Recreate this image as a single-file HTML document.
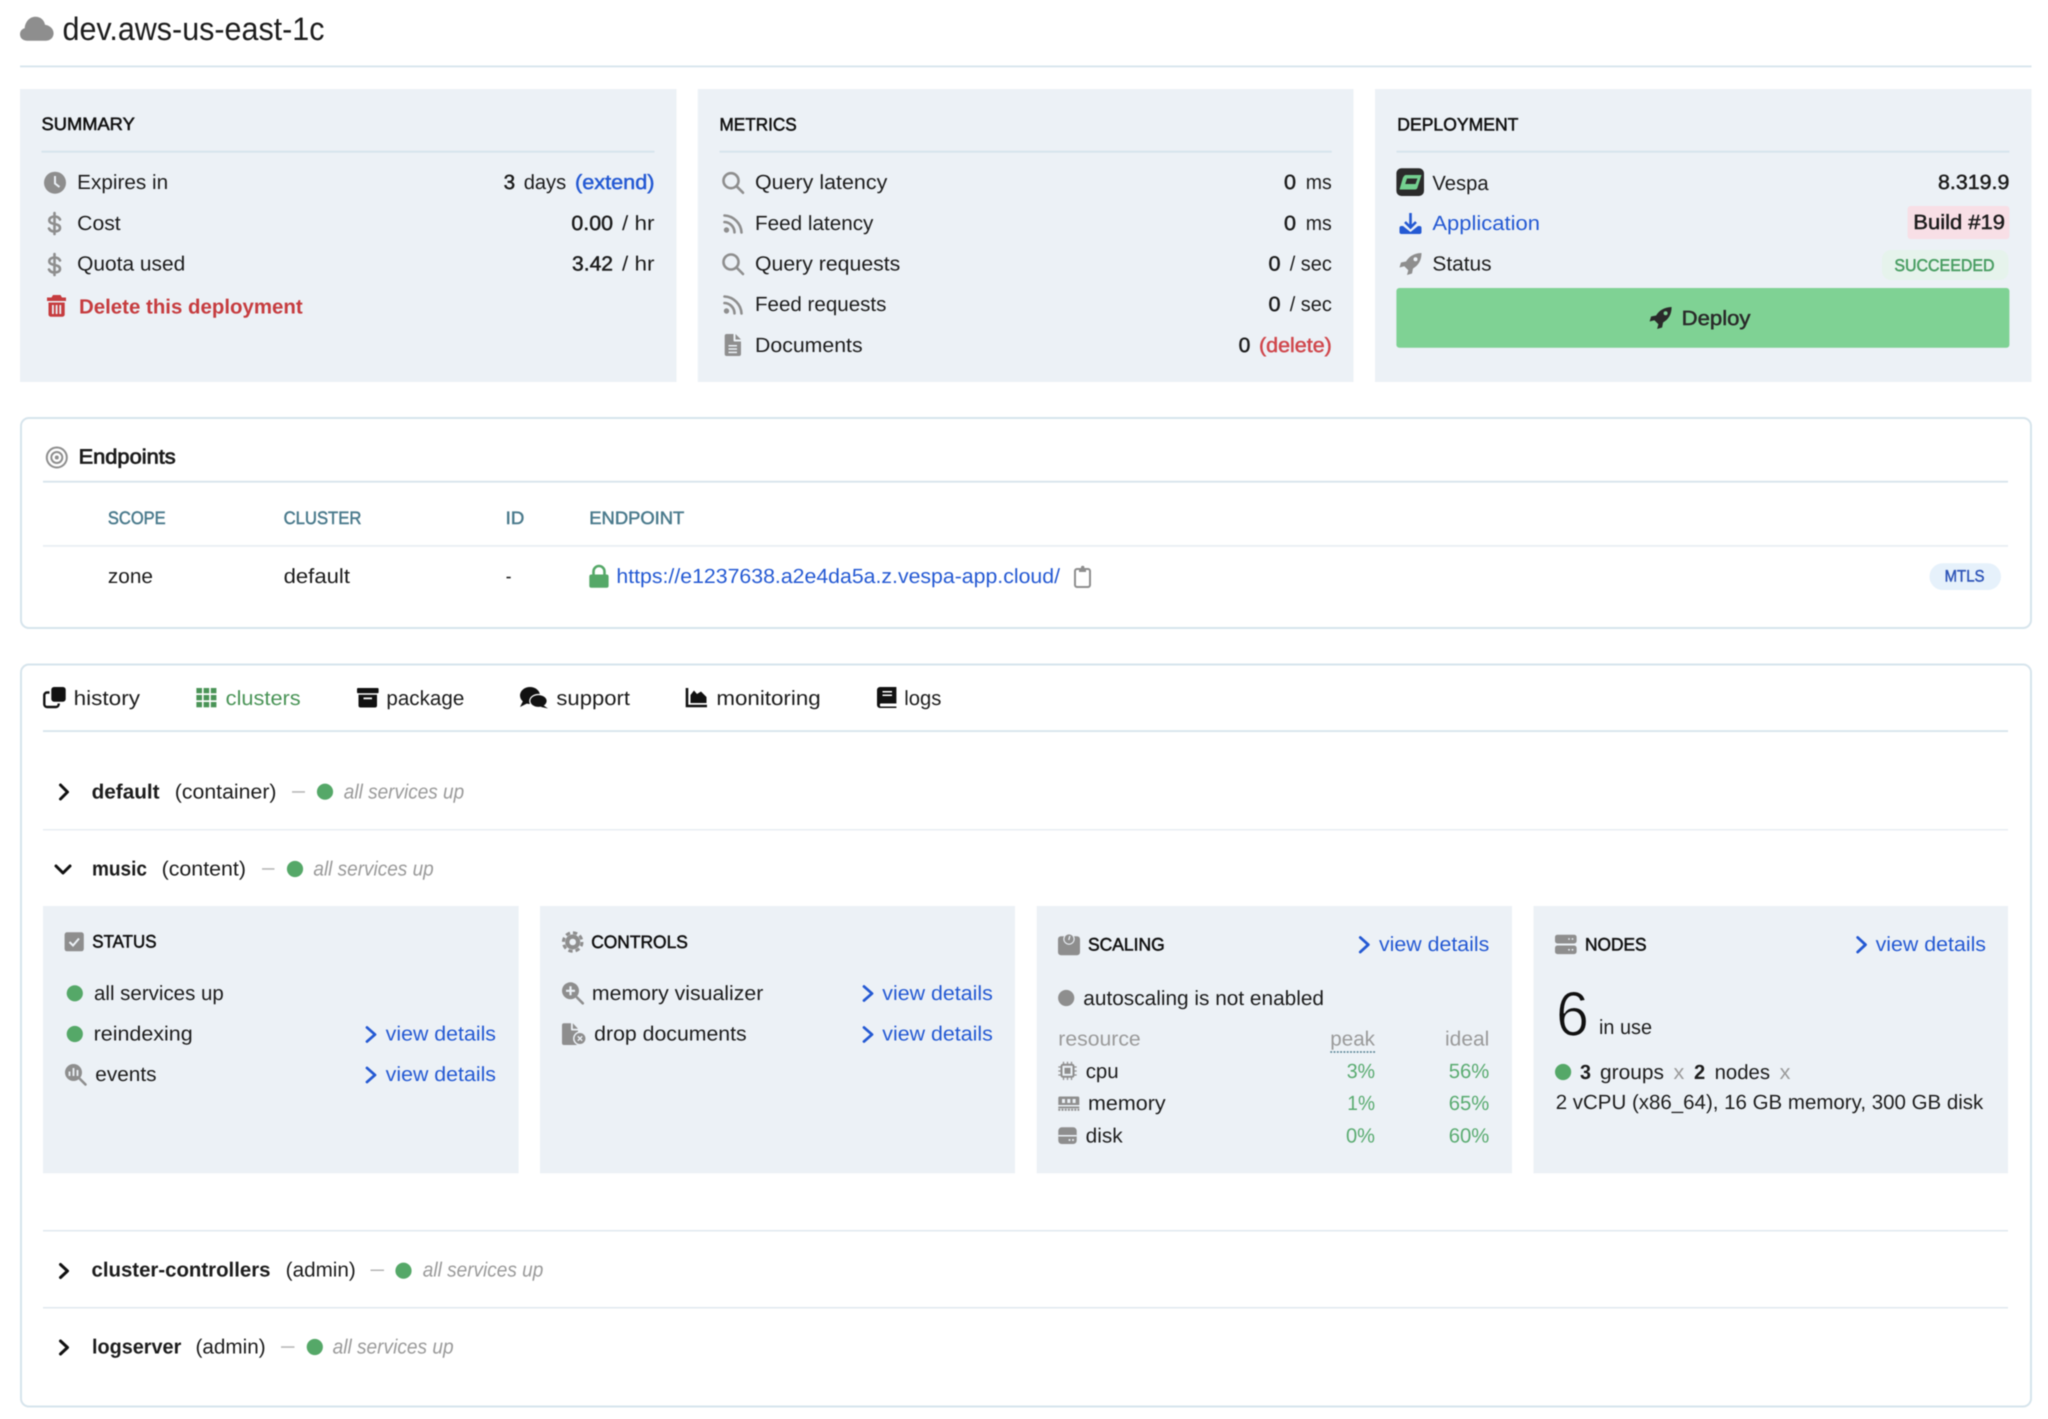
<!DOCTYPE html>
<html lang="en"><head><meta charset="utf-8"><title>dev.aws-us-east-1c</title>
<style>
html,body{margin:0;padding:0;background:#fff;width:2048px;height:1419px;overflow:hidden}
svg{display:block;filter:blur(.45px)}
text{font-family:"Liberation Sans",Arial,sans-serif;font-size:20.5px;fill:#1c1c1c;text-rendering:geometricPrecision;transform:translateY(-.9px)}
.m{stroke:#1c1c1c;stroke-width:.5px}
.b{font-weight:700}
.h{font-size:18px;stroke:#111;stroke-width:.55px;fill:#111}
.g{fill:#9a9a9a}
.i{font-style:italic;fill:#9a9a9a}
.l{fill:#2459d3}
.r{fill:#d0474c}
.th{font-size:18px;fill:#4a7a8c;stroke:#4a7a8c;stroke-width:.5px}
.p{fill:#59ab70}
.ic{fill:#8e8e8e}
.st{fill:none;stroke:#8e8e8e;stroke-width:2.6;stroke-linecap:round;stroke-linejoin:round}
.ch{fill:none;stroke:#111;stroke-width:3;stroke-linecap:round;stroke-linejoin:round}
.cb{fill:none;stroke:#2459d3;stroke-width:2.8;stroke-linecap:round;stroke-linejoin:round}
</style></head><body>
<svg xmlns="http://www.w3.org/2000/svg" width="2048" height="1419" viewBox="0 0 2048 1419">
<defs>
<path id="rocket" d="M22 0C14.500 .2 9.500 3.500 6.500 8.500L1.500 9.500L0 14.500L4.800 13.200L8.800 17.200L7.500 22L12.500 20.500L13.500 15.500C18.500 12.500 22 8 22 0ZM16 4.200a2 2 0 1 1 0 4a2 2 0 1 1 0-4Z" fill-rule="evenodd"/>
<path id="dollar" class="st" d="M12 6.500C11 4.500 9 3.500 6.500 3.500C3.500 3.500 1.300 5 1.300 7.300C1.300 12.500 12 9.500 12 15C12 17.300 9.800 18.500 6.500 18.500C4 18.500 2 17.500 1 15.500M6.500 0V21"/>
<g id="search" class="st"><circle cx="9" cy="9" r="7.500"/><path d="M14.500 14.500L21 21"/></g>
<g id="rss"><circle cx="3.500" cy="16" r="2.700" class="ic"/><path class="st" d="M1.500 8A10.500 10.500 0 0 1 11.500 18.300M1.500 1.500A18 18 0 0 1 18.500 18.500"/></g>
<g id="dot"><circle cx="0" cy="0" r="8.100" fill="#55a868"/></g>
</defs>

<!-- header -->
<path class="ic" d="M27 40.700C22.500 40.700 20 37.800 20 34.300C20 31 22 28.800 24.700 28.200C25 22 29.500 16.700 35.500 16.700C40.500 16.700 44.200 20 45 24.700C50 25.300 53.600 29 53.600 33.300C53.600 37.500 50.500 40.700 46 40.700Z"/>
<text x="62.500" y="40.700" textLength="262" lengthAdjust="spacingAndGlyphs" style="font-size:32.500px">dev.aws-us-east-1c</text>
<rect x="20" y="65.500" width="2011.500" height="1.800" fill="#d6e4ec"/>

<!-- panels -->
<rect x="20" y="89" width="656.500" height="293" fill="#ecf1f6"/>
<rect x="697.800" y="89" width="655.700" height="293" fill="#ecf1f6"/>
<rect x="1375" y="89" width="656.500" height="293" fill="#ecf1f6"/>
<rect x="41.500" y="150.800" width="613" height="1.800" fill="#d5e3ec"/>
<rect x="719.500" y="150.800" width="612.300" height="1.800" fill="#d5e3ec"/>
<rect x="1396.500" y="150.800" width="612.900" height="1.800" fill="#d5e3ec"/>

<!-- summary -->
<text class="h" x="41.500" y="131" textLength="93.300" lengthAdjust="spacingAndGlyphs">SUMMARY</text>
<circle cx="55" cy="182.700" r="11" class="ic"/><path d="M55 176V183.500L59.500 187" fill="none" stroke="#ecf1f6" stroke-width="2"/>
<text x="77.200" y="190" textLength="91" lengthAdjust="spacingAndGlyphs">Expires in</text>
<use href="#dollar" x="48" y="213"/>
<text x="77.200" y="230.700" textLength="43.500" lengthAdjust="spacingAndGlyphs">Cost</text>
<use href="#dollar" x="48" y="254"/>
<text x="77.200" y="271.300" textLength="108" lengthAdjust="spacingAndGlyphs">Quota used</text>
<path fill="#c63c3f" fill-rule="evenodd" d="M53 295H60.500L62 297.500H66V301H47V297.500H51.500ZM48.500 302.500H64.700V314.500a2.200 2.200 0 0 1-2.200 2.200H50.700a2.200 2.200 0 0 1-2.200-2.200ZM52 305V314H53.800V305ZM55.700 305V314H57.500V305ZM59.400 305V314H61.200V305Z"/>
<text class="b" style="fill:#c63c3f" x="79" y="314.300" textLength="223.700" lengthAdjust="spacingAndGlyphs">Delete this deployment</text>
<text class="m" x="503.600" y="190" textLength="11.500" lengthAdjust="spacingAndGlyphs">3</text>
<text x="523.700" y="190" textLength="42.500" lengthAdjust="spacingAndGlyphs">days</text>
<text class="l m" style="stroke:#2459d3" x="575" y="190" textLength="79.500" lengthAdjust="spacingAndGlyphs">(extend)</text>
<text class="m" x="571.400" y="230.700" textLength="41.600" lengthAdjust="spacingAndGlyphs">0.00</text>
<text x="622" y="230.700" textLength="32.500" lengthAdjust="spacingAndGlyphs">/ hr</text>
<text class="m" x="572" y="271.300" textLength="41" lengthAdjust="spacingAndGlyphs">3.42</text>
<text x="622" y="271.300" textLength="32.500" lengthAdjust="spacingAndGlyphs">/ hr</text>

<!-- metrics -->
<text class="h" x="719.500" y="131.300" textLength="77.200" lengthAdjust="spacingAndGlyphs">METRICS</text>
<use href="#search" x="722" y="171.700"/>
<use href="#rss" x="723" y="214"/>
<use href="#search" x="722" y="253"/>
<use href="#rss" x="723" y="295"/>
<path class="ic" fill-rule="evenodd" d="M726.700 334H733.500V340.500a1 1 0 0 0 1 1H741V354a2 2 0 0 1-2 2H726.700a2 2 0 0 1-2-2V336a2 2 0 0 1 2-2ZM735.500 334L741 339.500H735.500ZM728.500 345V346.500H737V345ZM728.500 348.300V349.800H737V348.300ZM728.500 351.600V353.100H737V351.600Z"/>
<text x="755" y="190" textLength="132.300" lengthAdjust="spacingAndGlyphs">Query latency</text>
<text x="755" y="230.700" textLength="118.400" lengthAdjust="spacingAndGlyphs">Feed latency</text>
<text x="755" y="271.300" textLength="145.300" lengthAdjust="spacingAndGlyphs">Query requests</text>
<text x="755" y="312" textLength="131.400" lengthAdjust="spacingAndGlyphs">Feed requests</text>
<text x="755" y="352.700" textLength="107.600" lengthAdjust="spacingAndGlyphs">Documents</text>
<text class="m" x="1284" y="190" textLength="12" lengthAdjust="spacingAndGlyphs">0</text>
<text x="1305.800" y="190" textLength="26" lengthAdjust="spacingAndGlyphs">ms</text>
<text class="m" x="1284" y="230.700" textLength="12" lengthAdjust="spacingAndGlyphs">0</text>
<text x="1305.800" y="230.700" textLength="26" lengthAdjust="spacingAndGlyphs">ms</text>
<text class="m" x="1268.500" y="271.300" textLength="12" lengthAdjust="spacingAndGlyphs">0</text>
<text x="1289.700" y="271.300" textLength="42.100" lengthAdjust="spacingAndGlyphs">/ sec</text>
<text class="m" x="1268.500" y="312" textLength="12" lengthAdjust="spacingAndGlyphs">0</text>
<text x="1289.700" y="312" textLength="42.100" lengthAdjust="spacingAndGlyphs">/ sec</text>
<text class="m" x="1238.600" y="352.700" textLength="11.700" lengthAdjust="spacingAndGlyphs">0</text>
<text class="r m" style="stroke:#d0474c" x="1259" y="352.700" textLength="72.800" lengthAdjust="spacingAndGlyphs">(delete)</text>

<!-- deployment -->
<text class="h" x="1397.300" y="131.300" textLength="121.100" lengthAdjust="spacingAndGlyphs">DEPLOYMENT</text>
<rect x="1396.400" y="168.300" width="27.600" height="27.700" rx="5" fill="#2b2b2b"/>
<path fill="#74d090" fill-rule="evenodd" d="M1404.500 175.500Q1405 175 1406 175H1421.500L1417.500 187.500Q1417 189.500 1415 189.500H1399.500L1403 177.500ZM1407 178.500L1405.200 184H1415.500L1417.500 178.500Z"/>
<text x="1432.400" y="190.700" textLength="56.200" lengthAdjust="spacingAndGlyphs">Vespa</text>
<text class="m" x="1938" y="190" textLength="71.400" lengthAdjust="spacingAndGlyphs">8.319.9</text>
<path d="M1410.500 213V227M1405 222L1410.500 227.500L1416 222" fill="none" stroke="#2459d3" stroke-width="2.600"/>
<path fill="#2459d3" fill-rule="evenodd" d="M1403 226L1410.500 232L1418 226H1419.500a2 2 0 0 1 2 2V232a2 2 0 0 1-2 2H1401.500a2 2 0 0 1-2-2V228a2 2 0 0 1 2-2Z"/>
<text class="l" x="1432.400" y="231" textLength="107.600" lengthAdjust="spacingAndGlyphs">Application</text>
<rect x="1907.600" y="206" width="101.800" height="33" rx="3" fill="#f8dfe6"/>
<text class="m" x="1913.300" y="230" textLength="91.700" lengthAdjust="spacingAndGlyphs">Build #19</text>
<use href="#rocket" x="1399.500" y="253" class="ic"/>
<text x="1432.400" y="271.300" textLength="59.200" lengthAdjust="spacingAndGlyphs">Status</text>
<rect x="1882" y="250" width="126.500" height="30" rx="9" fill="#e6f3ec"/>
<text x="1894.400" y="271.700" textLength="100.100" lengthAdjust="spacingAndGlyphs" style="font-size:17px;fill:#4a9e63;stroke:#4a9e63;stroke-width:.55px">SUCCEEDED</text>
<rect x="1396.400" y="288" width="613" height="59.700" rx="3" fill="#7fd294"/>
<use href="#rocket" x="1649.600" y="307" fill="#2a2a2a"/>
<text class="m" style="fill:#2a2a2a;stroke:#2a2a2a" x="1681.600" y="325.700" textLength="68.900" lengthAdjust="spacingAndGlyphs">Deploy</text>

<!-- endpoints -->
<rect x="21" y="418" width="2010" height="210" rx="8" fill="#fff" stroke="#d6e4ec" stroke-width="2"/>
<g fill="none" stroke="#8e8e8e" stroke-width="2"><circle cx="56.800" cy="457.500" r="10"/><circle cx="56.800" cy="457.500" r="5.500"/></g><circle cx="56.800" cy="457.500" r="2" class="ic"/>
<text class="m" style="stroke-width:.75px" x="78.600" y="464.300" textLength="97.100" lengthAdjust="spacingAndGlyphs">Endpoints</text>
<rect x="43" y="480.800" width="1965" height="1.800" fill="#d6e4ec"/>
<text class="th" x="107.900" y="525" textLength="57.800" lengthAdjust="spacingAndGlyphs">SCOPE</text>
<text class="th" x="283.600" y="525" textLength="77.800" lengthAdjust="spacingAndGlyphs">CLUSTER</text>
<text class="th" x="505.700" y="525" textLength="18.600" lengthAdjust="spacingAndGlyphs">ID</text>
<text class="th" x="589.300" y="525" textLength="95" lengthAdjust="spacingAndGlyphs">ENDPOINT</text>
<rect x="43" y="545" width="1965" height="1.800" fill="#e8eef3"/>
<text x="107.900" y="584" textLength="45.100" lengthAdjust="spacingAndGlyphs">zone</text>
<text x="283.600" y="584" textLength="66.400" lengthAdjust="spacingAndGlyphs">default</text>
<text x="505.700" y="584" textLength="5.700" lengthAdjust="spacingAndGlyphs">-</text>
<path d="M593.500 575V571.500a5.500 5.500 0 0 1 11 0V575" fill="none" stroke="#55a868" stroke-width="2.600"/>
<rect x="589.300" y="574.500" width="19.300" height="13.200" rx="2" fill="#55a868"/>
<text class="l" x="616.400" y="584" textLength="443.600" lengthAdjust="spacingAndGlyphs">https://e1237638.a2e4da5a.z.vespa-app.cloud/</text>
<rect x="1075" y="569" width="15" height="18" rx="2" fill="none" stroke="#8e8e8e" stroke-width="2"/>
<path class="ic" d="M1079 569.500H1081V567.500a1.700 1.700 0 0 1 3.400 0V569.500H1086V572H1079Z"/>
<rect x="1929.500" y="563.300" width="71.500" height="26.700" rx="13.300" fill="#e6f1fb"/>
<text x="1944.600" y="582.300" textLength="39.900" lengthAdjust="spacingAndGlyphs" style="font-size:16.500px;fill:#2f55b8;stroke:#2f55b8;stroke-width:.45px">MTLS</text>

<!-- tabs box -->
<rect x="21" y="664.500" width="2010" height="742" rx="8" fill="#fff" stroke="#d6e4ec" stroke-width="2"/>
<path fill="#111" d="M54 687H63a2.700 2.700 0 0 1 2.700 2.700V699a2.700 2.700 0 0 1-2.700 2.700H54a2.700 2.700 0 0 1-2.700-2.700V689.700A2.700 2.700 0 0 1 54 687Z"/>
<path d="M49.500 692.500H47a2.700 2.700 0 0 0-2.700 2.700V704.300A2.700 2.700 0 0 0 47 707H56a2.700 2.700 0 0 0 2.700-2.700V703.500" fill="none" stroke="#111" stroke-width="2.400"/>
<text x="73.600" y="706" textLength="66.400" lengthAdjust="spacingAndGlyphs">history</text>
<g fill="#4a9457">
<rect x="196.400" y="688" width="5.600" height="5.300"/><rect x="203.600" y="688" width="5.600" height="5.300"/><rect x="210.800" y="688" width="5.600" height="5.300"/>
<rect x="196.400" y="695" width="5.600" height="5.300"/><rect x="203.600" y="695" width="5.600" height="5.300"/><rect x="210.800" y="695" width="5.600" height="5.300"/>
<rect x="196.400" y="702" width="5.600" height="5.300"/><rect x="203.600" y="702" width="5.600" height="5.300"/><rect x="210.800" y="702" width="5.600" height="5.300"/></g>
<text x="225.700" y="706" textLength="75" lengthAdjust="spacingAndGlyphs" style="fill:#4a9457">clusters</text>
<rect x="357" y="688" width="21.600" height="5.200" rx="1" fill="#111"/>
<path fill="#111" fill-rule="evenodd" d="M358.500 694.800H377V705.500a2 2 0 0 1-2 2H360.500a2 2 0 0 1-2-2ZM363.500 697.500V699.300H372V697.500Z"/>
<text x="386.400" y="706" textLength="77.900" lengthAdjust="spacingAndGlyphs">package</text>
<ellipse cx="530" cy="695.500" rx="10" ry="8.500" fill="#111"/><path d="M523 701L520 707L528 703Z" fill="#111"/>
<ellipse cx="538.500" cy="701" rx="8.700" ry="6.500" fill="#111" stroke="#fff" stroke-width="1.200"/><path d="M543 705L548 708.500L541 707Z" fill="#111"/>
<text x="556.400" y="706" textLength="73.600" lengthAdjust="spacingAndGlyphs">support</text>
<path d="M687 688V706H707" fill="none" stroke="#111" stroke-width="2.600"/>
<path d="M690.500 703V695L694 690.500L697 694L701 691.500L706.500 697V703Z" fill="#111"/>
<text x="716.400" y="706" textLength="104.300" lengthAdjust="spacingAndGlyphs">monitoring</text>
<path fill="#111" fill-rule="evenodd" d="M880 687H896.400V703.500H880.500a2 2 0 0 0 0 3H896.400V708H880a3 3 0 0 1-3-3V690a3 3 0 0 1 3-3ZM882.500 691V692.500H892V691ZM882.500 694.500V696H892V694.500Z"/>
<text x="904.300" y="706" textLength="37.100" lengthAdjust="spacingAndGlyphs">logs</text>
<rect x="43" y="730.200" width="1965" height="1.800" fill="#d6e4ec"/>

<!-- default -->
<path class="ch" d="M60.500 785L67.500 792L60.500 799"/>
<text class="b" x="91.600" y="799.300" textLength="68" lengthAdjust="spacingAndGlyphs">default</text>
<text x="174.800" y="799.300" textLength="101.700" lengthAdjust="spacingAndGlyphs">(container)</text>
<rect x="292" y="791.200" width="13" height="1.500" fill="#b5b5b5"/>
<use href="#dot" x="325" y="791.700"/>
<text class="i" x="343.800" y="799.300" textLength="120.400" lengthAdjust="spacingAndGlyphs">all services up</text>
<rect x="43" y="829" width="1965" height="1.500" fill="#e8eef3"/>

<!-- music -->
<path class="ch" d="M56 866L63 873L70 866"/>
<text class="b" x="92" y="876.300" textLength="55" lengthAdjust="spacingAndGlyphs">music</text>
<text x="161.600" y="876.300" textLength="84.400" lengthAdjust="spacingAndGlyphs">(content)</text>
<rect x="262" y="868.200" width="12.500" height="1.500" fill="#b5b5b5"/>
<use href="#dot" x="295" y="869"/>
<text class="i" x="313.400" y="876.300" textLength="120.300" lengthAdjust="spacingAndGlyphs">all services up</text>

<rect x="43" y="906" width="475.600" height="267.300" fill="#ecf1f6"/>
<rect x="540" y="906" width="475" height="267.300" fill="#ecf1f6"/>
<rect x="1036.700" y="906" width="475.300" height="267.300" fill="#ecf1f6"/>
<rect x="1533.500" y="906" width="474.500" height="267.300" fill="#ecf1f6"/>

<!-- status -->
<rect x="64.600" y="932.300" width="19.200" height="19" rx="2.500" class="ic"/><path d="M69.500 942L73 945.500L79 938.500" fill="none" stroke="#ecf1f6" stroke-width="2"/>
<text class="h" x="92.300" y="948.300" textLength="64.200" lengthAdjust="spacingAndGlyphs">STATUS</text>
<use href="#dot" x="74.800" y="993.300"/>
<text x="94" y="1000.700" textLength="129.800" lengthAdjust="spacingAndGlyphs">all services up</text>
<use href="#dot" x="74.800" y="1034"/>
<text x="93.600" y="1041.300" textLength="99.100" lengthAdjust="spacingAndGlyphs">reindexing</text>
<circle cx="73.500" cy="1072.500" r="8.500" class="ic"/><path d="M80 1079L85.500 1084.500" class="st"/>
<path d="M69.500 1071.500V1076M73.500 1068V1076M77.500 1070V1076" stroke="#ecf1f6" stroke-width="1.800"/>
<text x="95.300" y="1082" textLength="61.200" lengthAdjust="spacingAndGlyphs">events</text>
<path class="cb" d="M367 1027.500L375 1034.500L367 1041.500"/>
<text class="l" x="385.700" y="1041.300" textLength="110.300" lengthAdjust="spacingAndGlyphs">view details</text>
<path class="cb" d="M367 1068L375 1075L367 1082"/>
<text class="l" x="385.700" y="1082" textLength="110.300" lengthAdjust="spacingAndGlyphs">view details</text>

<!-- controls -->
<circle cx="572.700" cy="942" r="7.500" class="ic"/><circle cx="572.700" cy="942" r="9.300" fill="none" stroke="#8e8e8e" stroke-width="3" stroke-dasharray="4.300 3"/><circle cx="572.700" cy="942" r="3.300" fill="#ecf1f6"/>
<text class="h" x="591.200" y="948.700" textLength="96.700" lengthAdjust="spacingAndGlyphs">CONTROLS</text>
<circle cx="570.500" cy="990.800" r="8.500" class="ic"/><path d="M577 997.500L582.800 1003.300" class="st"/>
<path d="M566 990.800H575M570.500 986.300V995.300" stroke="#ecf1f6" stroke-width="2.200"/>
<text x="591.900" y="1000.700" textLength="171.400" lengthAdjust="spacingAndGlyphs">memory visualizer</text>
<path class="ic" fill-rule="evenodd" d="M564 1023.300H571V1029.500a1 1 0 0 0 1 1H578V1043a2 2 0 0 1-2 2H564a2 2 0 0 1-2-2V1025.300a2 2 0 0 1 2-2ZM572.800 1023.300L578 1028.700H572.800Z"/>
<circle cx="580" cy="1038.500" r="6.200" class="ic" stroke="#ecf1f6" stroke-width="1.500"/><path d="M577.800 1036.300L582.200 1040.700M582.200 1036.300L577.800 1040.700" stroke="#ecf1f6" stroke-width="1.400"/>
<text x="594.200" y="1041.300" textLength="152.500" lengthAdjust="spacingAndGlyphs">drop documents</text>
<path class="cb" d="M864 986.500L872 993.500L864 1000.500"/>
<text class="l" x="882.300" y="1000.700" textLength="110.500" lengthAdjust="spacingAndGlyphs">view details</text>
<path class="cb" d="M864 1027.500L872 1034.500L864 1041.500"/>
<text class="l" x="882.300" y="1041.300" textLength="110.500" lengthAdjust="spacingAndGlyphs">view details</text>

<!-- scaling -->
<rect x="1058" y="936.300" width="22" height="19" rx="3" class="ic"/><circle cx="1069" cy="939" r="5.700" fill="#ecf1f6"/><circle cx="1069" cy="939" r="4.600" class="ic"/><path d="M1069.800 936L1068.800 940" stroke="#ecf1f6" stroke-width="1.400"/>
<text class="h" x="1088" y="951.300" textLength="76.700" lengthAdjust="spacingAndGlyphs">SCALING</text>
<path class="cb" d="M1360.300 937.500L1368.300 944.700L1360.300 952"/>
<text class="l" x="1379" y="952" textLength="110.300" lengthAdjust="spacingAndGlyphs">view details</text>
<circle cx="1066.200" cy="998" r="8.100" class="ic"/>
<text x="1083.300" y="1005.700" textLength="240.700" lengthAdjust="spacingAndGlyphs">autoscaling is not enabled</text>
<text class="g" x="1058.300" y="1046.300" textLength="82.400" lengthAdjust="spacingAndGlyphs">resource</text>
<text class="g" x="1330.300" y="1046.300" textLength="44.700" lengthAdjust="spacingAndGlyphs">peak</text>
<path d="M1330.300 1052H1375" stroke="#4a7a8c" stroke-width="1.500" stroke-dasharray="1.800 1.500"/>
<text class="g" x="1445" y="1046.300" textLength="44.300" lengthAdjust="spacingAndGlyphs">ideal</text>

<rect x="1061.500" y="1064.800" width="12" height="12" rx="1.500" fill="none" stroke="#8e8e8e" stroke-width="2"/><rect x="1064.500" y="1067.800" width="6" height="6" class="ic"/>
<path d="M1058.300 1067H1061M1058.300 1071H1061M1058.300 1075H1061M1074 1067H1076.700M1074 1071H1076.700M1074 1075H1076.700M1063.500 1061.700V1064.500M1067.500 1061.700V1064.500M1071.500 1061.700V1064.500M1063.500 1077V1080M1067.500 1077V1080M1071.500 1077V1080" stroke="#8e8e8e" stroke-width="1.300"/>
<text x="1085.700" y="1078.700" textLength="33" lengthAdjust="spacingAndGlyphs">cpu</text>
<text class="p" x="1346.700" y="1078.700" textLength="28.300" lengthAdjust="spacingAndGlyphs">3%</text>
<text class="p" x="1448.700" y="1078.700" textLength="40.600" lengthAdjust="spacingAndGlyphs">56%</text>

<path class="ic" fill-rule="evenodd" d="M1058.300 1098a1.500 1.500 0 0 1 1.500-1.500H1077.800a1.500 1.500 0 0 1 1.500 1.500V1105H1058.300ZM1062 1099V1103H1065V1099ZM1067.300 1099V1103H1070.300V1099ZM1072.600 1099V1103H1075.600V1099Z"/>
<rect x="1058.300" y="1106.500" width="21" height="1.800" class="ic"/>
<path d="M1058.300 1109.700H1079.300" stroke="#8e8e8e" stroke-width="2" stroke-dasharray="2 1.200"/>
<text x="1088" y="1110.700" textLength="77.700" lengthAdjust="spacingAndGlyphs">memory</text>
<text class="p" x="1347.300" y="1110.700" textLength="27.700" lengthAdjust="spacingAndGlyphs">1%</text>
<text class="p" x="1448.700" y="1110.700" textLength="40.600" lengthAdjust="spacingAndGlyphs">65%</text>

<rect x="1058.300" y="1127.300" width="18.400" height="16.700" rx="3.500" class="ic"/><rect x="1058.300" y="1135" width="18.400" height="1.500" fill="#ecf1f6"/><circle cx="1069.500" cy="1140" r="1" fill="#ecf1f6"/><circle cx="1073" cy="1140" r="1" fill="#ecf1f6"/>
<text x="1085.700" y="1143.300" textLength="37" lengthAdjust="spacingAndGlyphs">disk</text>
<text class="p" x="1346" y="1143.300" textLength="29" lengthAdjust="spacingAndGlyphs">0%</text>
<text class="p" x="1448.700" y="1143.300" textLength="40.600" lengthAdjust="spacingAndGlyphs">60%</text>

<!-- nodes -->
<rect x="1555" y="934.700" width="21.600" height="8.800" rx="2.500" class="ic"/><rect x="1555" y="945.500" width="21.600" height="8.600" rx="2.500" class="ic"/>
<circle cx="1569" cy="939" r=".9" fill="#ecf1f6"/><circle cx="1572.500" cy="939" r=".9" fill="#ecf1f6"/><circle cx="1569" cy="949.800" r=".9" fill="#ecf1f6"/><circle cx="1572.500" cy="949.800" r=".9" fill="#ecf1f6"/>
<text class="h" x="1585" y="951.300" textLength="61.600" lengthAdjust="spacingAndGlyphs">NODES</text>
<path class="cb" d="M1857.700 937.500L1865.500 944.700L1857.700 952"/>
<text class="l" x="1875.600" y="952" textLength="110.400" lengthAdjust="spacingAndGlyphs">view details</text>
<text x="1556" y="1036.500" textLength="33" lengthAdjust="spacingAndGlyphs" style="font-size:63px;fill:#111;stroke:#ecf1f6;stroke-width:1px">6</text>
<text x="1599" y="1035" textLength="53" lengthAdjust="spacingAndGlyphs">in use</text>
<use href="#dot" x="1563.100" y="1072"/>
<text class="b" x="1580" y="1080" textLength="11" lengthAdjust="spacingAndGlyphs">3</text>
<text x="1600" y="1080" textLength="64" lengthAdjust="spacingAndGlyphs">groups</text>
<text class="g" x="1673.500" y="1080" textLength="10.800" lengthAdjust="spacingAndGlyphs">x</text>
<text class="b" x="1694" y="1080" textLength="11.200" lengthAdjust="spacingAndGlyphs">2</text>
<text x="1714.600" y="1080" textLength="55.400" lengthAdjust="spacingAndGlyphs">nodes</text>
<text class="g" x="1779.600" y="1080" textLength="10.800" lengthAdjust="spacingAndGlyphs">x</text>
<text x="1555.700" y="1110" textLength="427.600" lengthAdjust="spacingAndGlyphs">2 vCPU (x86_64), 16 GB memory, 300 GB disk</text>

<!-- bottom rows -->
<rect x="43" y="1230" width="1965" height="1.500" fill="#e0e9ef"/>
<path class="ch" d="M60.500 1264.500L67.500 1271L60.500 1277.500"/>
<text class="b" x="91.500" y="1277.300" textLength="179" lengthAdjust="spacingAndGlyphs">cluster-controllers</text>
<text x="285.700" y="1277.300" textLength="70.100" lengthAdjust="spacingAndGlyphs">(admin)</text>
<rect x="370.500" y="1269.500" width="13.500" height="1.500" fill="#b5b5b5"/>
<use href="#dot" x="403.500" y="1270.700"/>
<text class="i" x="422.800" y="1277.300" textLength="120.500" lengthAdjust="spacingAndGlyphs">all services up</text>
<rect x="43" y="1307" width="1965" height="1.500" fill="#e0e9ef"/>
<path class="ch" d="M60.500 1341L67.500 1347.500L60.500 1354"/>
<text class="b" x="92" y="1354.300" textLength="89.300" lengthAdjust="spacingAndGlyphs">logserver</text>
<text x="195.500" y="1354.300" textLength="70.100" lengthAdjust="spacingAndGlyphs">(admin)</text>
<rect x="281" y="1346.300" width="13.500" height="1.500" fill="#b5b5b5"/>
<use href="#dot" x="314.800" y="1347"/>
<text class="i" x="332.600" y="1354.300" textLength="121" lengthAdjust="spacingAndGlyphs">all services up</text>
</svg>
</body></html>
